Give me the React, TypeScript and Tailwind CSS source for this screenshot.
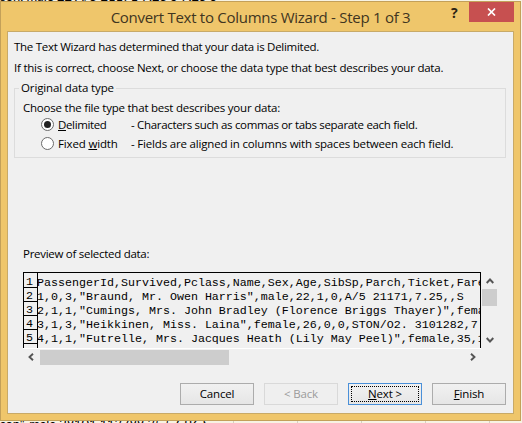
import React from 'react';

const rows = [
  'PassengerId,Survived,Pclass,Name,Sex,Age,SibSp,Parch,Ticket,Fare',
  '1,0,3,"Braund, Mr. Owen Harris",male,22,1,0,A/5 21171,7.25,,S',
  '2,1,1,"Cumings, Mrs. John Bradley (Florence Briggs Thayer)",fema',
  '3,1,3,"Heikkinen, Miss. Laina",female,26,0,0,STON/O2. 3101282,7',
  '4,1,1,"Futrelle, Mrs. Jacques Heath (Lily May Peel)",female,35,1',
];

function Chevron({ className }: { className: string }) {
  return (
    <svg className={className} width="8" height="8" viewBox="0 0 8 8" fill="none" stroke="#555" strokeWidth="1.9">
      <path d="M.7 6 4 2.5 7.3 6" />
    </svg>
  );
}

function Radio({ checked }: { checked?: boolean }) {
  return (
    <span className="flex h-[13px] w-[13px] shrink-0 items-center justify-center rounded-full border border-[#6b6b6b] bg-white">
      {checked && <span className="h-[7px] w-[7px] rounded-full bg-[#222]" />}
    </span>
  );
}

export default function App() {
  return (
    <div className="relative h-[423px] w-[522px] overflow-hidden bg-[#f7f3e3] font-['Open_Sans','Noto_Sans',sans-serif] text-[11.5px] leading-[16px] whitespace-pre text-black">
      <div className="absolute -top-[10px] left-0 font-['Lato',sans-serif] text-[13px] leading-[13px]">son, male 22 A/5 21171 7.25 S 7.25 S</div>
      <div className="absolute top-[418px] left-0 font-['Lato',sans-serif] text-[13px] leading-[13px] tracking-[-0.1px]">son", male 28101 113788 35.5 C96 S</div>
      <div className="absolute top-[421px] left-[233px] flex h-[2px] w-[257px] justify-between">
        <i className="w-px bg-[#d5d0bf]" /><i className="w-px bg-[#d5d0bf]" /><i className="w-px bg-[#d5d0bf]" /><i className="w-px bg-[#d5d0bf]" /><i className="w-px bg-[#d5d0bf]" />
      </div>
      <div className="relative mt-px flex h-[420px] w-[521px] flex-col border border-[#c3a059] bg-[#efc66b] px-[6px] pb-[6px]">
        <header className="relative flex h-[29px] shrink-0 justify-center text-[15px] leading-[30px] text-[#3f351f]">
          <h1 className="tracking-[-0.27px]">Convert Text to Columns Wizard - Step 1 of 3</h1>
          <div className="absolute top-0 right-0 flex">
            <span className="w-[18px] text-[14px] leading-[21px] font-bold text-[#2b2312]">?</span>
            <button className="flex h-[20px] w-[45px] items-center justify-center bg-[#c75050]">
              <svg width="9" height="8" viewBox="0 0 9 8" stroke="white" strokeWidth="1.7"><path d="m1 .5 7 7m0-7-7 7" /></svg>
            </button>
          </div>
        </header>
        <main className="flex min-h-0 flex-1 flex-col border border-[#c8aa68] bg-[#f0f0f0]">
          <p className="mt-[7px] ml-[6px] tracking-[-0.28px]">The Text Wizard has determined that your data is Delimited.</p>
          <p className="mt-[5px] ml-[6px] tracking-[-0.23px]">If this is correct, choose Next, or choose the data type that best describes your data.</p>
          <fieldset className="mx-[6px] mt-[4px] h-[78px] w-[492px] border border-[#dcdcdc] pl-[8px]">
            <legend className="-ml-[4px] h-[16px] px-[2px] tracking-[-0.13px]">Original data type</legend>
            <p className="mt-[4px] tracking-[-0.22px]">Choose the file type that best describes your data:</p>
            <label className="ml-[18px] flex h-[16px] items-center">
              <Radio checked />
              <span className="mt-px ml-[4px] w-[73px] tracking-[-0.36px]"><u className="underline-offset-1">D</u>elimited</span>
              <span className="mt-px tracking-[-0.32px]">- Characters such as commas or tabs separate each field.</span>
            </label>
            <label className="mt-[3px] ml-[18px] flex h-[16px] items-center">
              <Radio />
              <span className="mt-px ml-[4px] w-[73px] tracking-[-0.16px]">Fixed <u className="underline-offset-1">w</u>idth</span>
              <span className="mt-px tracking-[-0.18px]">- Fields are aligned in columns with spaces between each field.</span>
            </label>
          </fieldset>
          <p className="mt-[88px] ml-[15px] tracking-[-0.28px]">Preview of selected data:</p>
          <section className="mt-[10px] ml-[15px] flex h-[76px] w-[475px]">
            <div className="h-[76px] w-[458px] overflow-hidden border border-b-0 border-black font-['Liberation_Mono',monospace] text-[11.67px] leading-[14px]">
              <div className="h-px w-[14px] border-r border-black" />
              {rows.map((row, i) => (
                <div key={i} className="flex h-[14px]">
                  <span className="w-[14px] shrink-0 border-r border-b border-black pl-[2px] leading-[17px]">{i + 1}</span>
                  <span className="-ml-px leading-[18px]">{row}</span>
                </div>
              ))}
              <div className="h-[5px] w-[14px] border-r border-black" />
            </div>
            <div className="flex w-[17px] flex-col items-center">
              <Chevron className="mt-[5px]" />
              <span className="mt-[4px] h-[17px] w-[15px] bg-[#cdcdcd]" />
              <Chevron className="mt-auto mb-[4px] rotate-180" />
            </div>
          </section>
          <div className="ml-[15px] flex h-[17px] w-[458px] items-center border-t border-white">
            <Chevron className="ml-[4px] -rotate-90" />
            <span className="ml-[5px] h-[15px] w-[189px] bg-[#cdcdcd]" />
            <Chevron className="mr-[4px] ml-auto rotate-90" />
          </div>
          <footer className="mt-[18px] mr-[7px] flex justify-end gap-[10px] tracking-[-0.15px]">
            <button className="h-[22px] w-[74px] border border-[#acacac] bg-linear-to-b from-[#f1f1f1] to-[#e6e6e6]">Cancel</button>
            <button className="h-[22px] w-[74px] border border-[#d9d9d9] bg-[#efefef] text-[#9b9b9b]">&lt; Back</button>
            <button className="h-[22px] w-[74px] border border-[#4a90d9] bg-linear-to-b from-[#f1f1f1] to-[#e6e6e6] p-[2px]">
              <span className="block h-[16px] border border-dotted border-black leading-[14px]"><u className="underline-offset-1">N</u>ext &gt;</span>
            </button>
            <button className="h-[22px] w-[74px] border border-[#acacac] bg-linear-to-b from-[#f1f1f1] to-[#e6e6e6]"><u className="underline-offset-1">F</u>inish</button>
          </footer>
        </main>
      </div>
    </div>
  );
}
